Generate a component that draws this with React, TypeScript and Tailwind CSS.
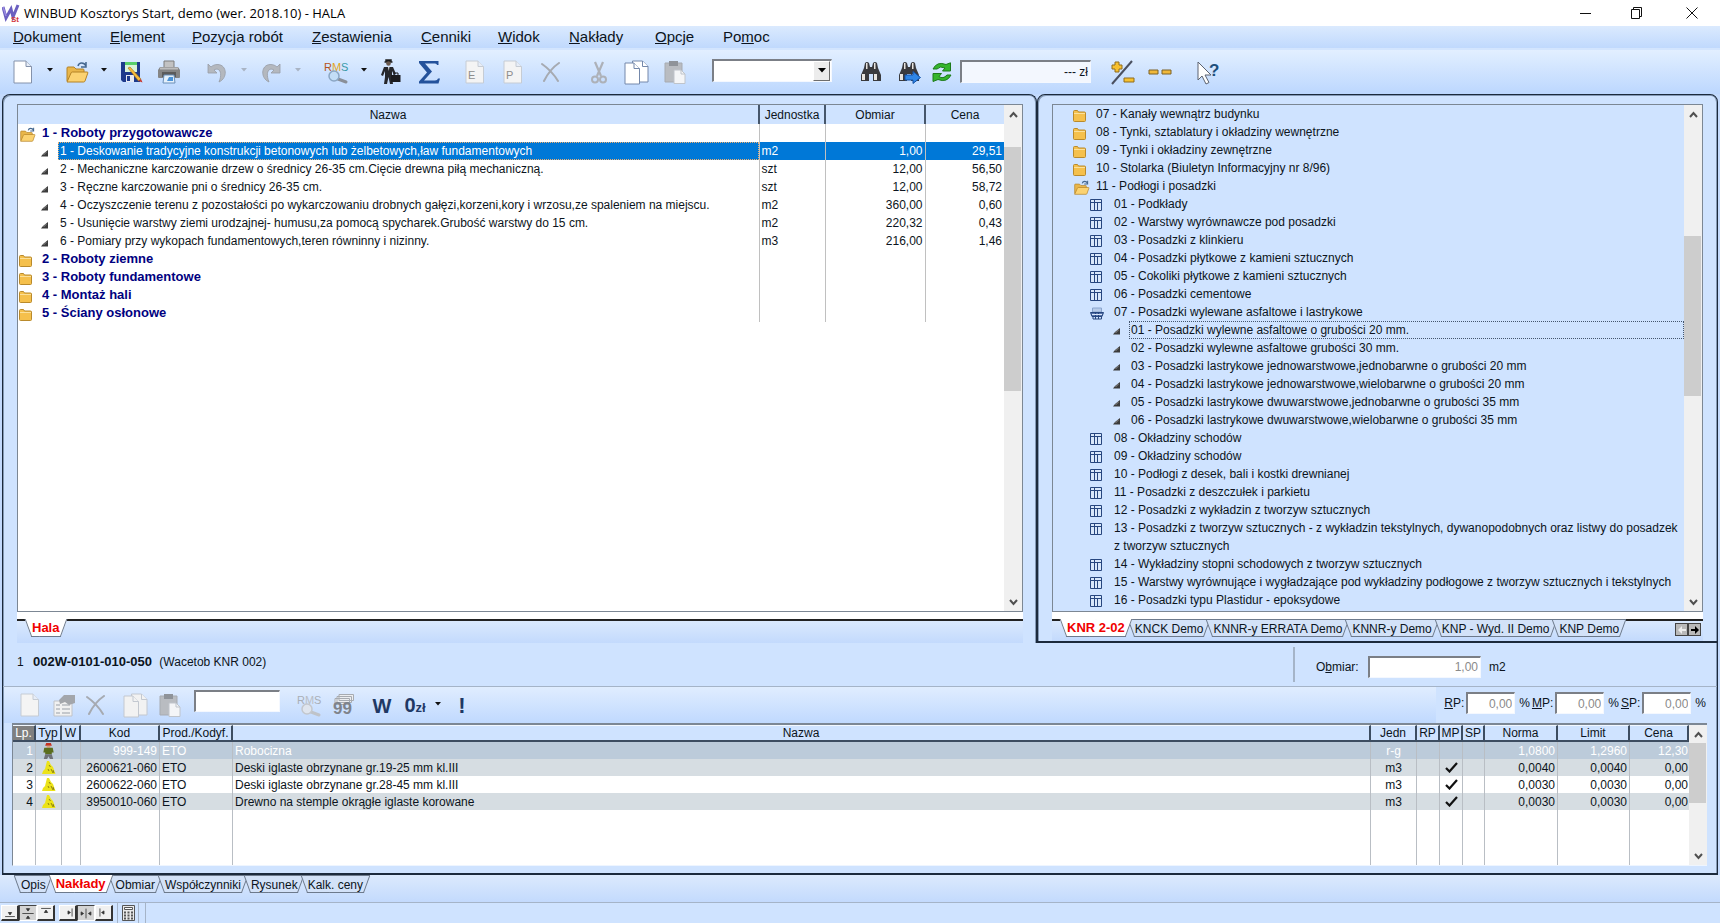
import React from 'react';

type IconProps = { className?: string };

interface WorkItem {
  name: string;
  unit?: string;
  amount?: string;
  price?: string;
  kind: 'open' | 'closed' | 'leaf';
  selected?: boolean;
}

interface TreeNode {
  label: string;
  level: 0 | 1 | 2;
  icon: 'folder' | 'open' | 'book' | 'bookOpen' | 'leaf';
  focused?: boolean;
}

const WORK_ITEMS: WorkItem[] = [
  { name: '1 - Roboty przygotowawcze', kind: 'open' },
  { name: '1 - Deskowanie tradycyjne konstrukcji betonowych lub żelbetowych,ław fundamentowych', unit: 'm2', amount: '1,00', price: '29,51', kind: 'leaf', selected: true },
  { name: '2 - Mechaniczne karczowanie drzew o średnicy 26-35 cm.Cięcie drewna piłą mechaniczną.', unit: 'szt', amount: '12,00', price: '56,50', kind: 'leaf' },
  { name: '3 - Ręczne karczowanie pni o średnicy 26-35 cm.', unit: 'szt', amount: '12,00', price: '58,72', kind: 'leaf' },
  { name: '4 - Oczyszczenie terenu z pozostałości po wykarczowaniu drobnych gałęzi,korzeni,kory i wrzosu,ze spaleniem na miejscu.', unit: 'm2', amount: '360,00', price: '0,60', kind: 'leaf' },
  { name: '5 - Usunięcie warstwy ziemi urodzajnej- humusu,za pomocą spycharek.Grubość warstwy do 15 cm.', unit: 'm2', amount: '220,32', price: '0,43', kind: 'leaf' },
  { name: '6 - Pomiary przy wykopach fundamentowych,teren równinny i nizinny.', unit: 'm3', amount: '216,00', price: '1,46', kind: 'leaf' },
  { name: '2 - Roboty ziemne', kind: 'closed' },
  { name: '3 - Roboty fundamentowe', kind: 'closed' },
  { name: '4 - Montaż hali', kind: 'closed' },
  { name: '5 - Ściany osłonowe', kind: 'closed' },
];

const CATALOG: TreeNode[] = [
  { label: '07 - Kanały wewnątrz budynku', level: 0, icon: 'folder' },
  { label: '08 - Tynki, sztablatury i okładziny wewnętrzne', level: 0, icon: 'folder' },
  { label: '09 - Tynki i okładziny zewnętrzne', level: 0, icon: 'folder' },
  { label: '10 - Stolarka (Biuletyn Informacyjny nr 8/96)', level: 0, icon: 'folder' },
  { label: '11 - Podłogi i posadzki', level: 0, icon: 'open' },
  { label: '01 - Podkłady', level: 1, icon: 'book' },
  { label: '02 - Warstwy wyrównawcze pod posadzki', level: 1, icon: 'book' },
  { label: '03 - Posadzki z klinkieru', level: 1, icon: 'book' },
  { label: '04 - Posadzki płytkowe z kamieni sztucznych', level: 1, icon: 'book' },
  { label: '05 - Cokoliki płytkowe z kamieni sztucznych', level: 1, icon: 'book' },
  { label: '06 - Posadzki cementowe', level: 1, icon: 'book' },
  { label: '07 - Posadzki wylewane asfaltowe i lastrykowe', level: 1, icon: 'bookOpen' },
  { label: '01 - Posadzki wylewne asfaltowe o grubości 20 mm.', level: 2, icon: 'leaf', focused: true },
  { label: '02 - Posadzki wylewne asfaltowe grubości 30 mm.', level: 2, icon: 'leaf' },
  { label: '03 - Posadzki lastrykowe jednowarstwowe,jednobarwne o grubości 20 mm', level: 2, icon: 'leaf' },
  { label: '04 - Posadzki lastrykowe jednowarstwowe,wielobarwne o grubości 20 mm', level: 2, icon: 'leaf' },
  { label: '05 - Posadzki lastrykowe dwuwarstwowe,jednobarwne o grubości 35 mm', level: 2, icon: 'leaf' },
  { label: '06 - Posadzki lastrykowe dwuwarstwowe,wielobarwne o grubości 35 mm', level: 2, icon: 'leaf' },
  { label: '08 - Okładziny schodów', level: 1, icon: 'book' },
  { label: '09 - Okładziny schodów', level: 1, icon: 'book' },
  { label: '10 - Podłogi z desek, bali i kostki drewnianej', level: 1, icon: 'book' },
  { label: '11 - Posadzki z deszczułek i parkietu', level: 1, icon: 'book' },
  { label: '12 - Posadzki z wykładzin z tworzyw sztucznych', level: 1, icon: 'book' },
  { label: '13 - Posadzki z tworzyw sztucznych - z wykładzin tekstylnych, dywanopodobnych oraz listwy do posadzek z tworzyw sztucznych', level: 1, icon: 'book' },
  { label: '14 - Wykładziny stopni schodowych z tworzyw sztucznych', level: 1, icon: 'book' },
  { label: '15 - Warstwy wyrównujące i wygładzające pod wykładziny podłogowe z tworzyw sztucznych i tekstylnych', level: 1, icon: 'book' },
  { label: '16 - Posadzki typu Plastidur - epoksydowe', level: 1, icon: 'book' },
];

const RESOURCES = [
  { lp: 1, kod: '999-149', prod: 'ETO', nazwa: 'Robocizna', jedn: 'r-g', mp: false, norma: '1,0800', limit: '1,2960', cena: '12,30' },
  { lp: 2, kod: '2600621-060', prod: 'ETO', nazwa: 'Deski iglaste obrzynane gr.19-25 mm kl.III', jedn: 'm3', mp: true, norma: '0,0040', limit: '0,0040', cena: '0,00' },
  { lp: 3, kod: '2600622-060', prod: 'ETO', nazwa: 'Deski iglaste obrzynane gr.28-45 mm kl.III', jedn: 'm3', mp: true, norma: '0,0030', limit: '0,0030', cena: '0,00' },
  { lp: 4, kod: '3950010-060', prod: 'ETO', nazwa: 'Drewno na stemple okrągłe iglaste korowane', jedn: 'm3', mp: true, norma: '0,0030', limit: '0,0030', cena: '0,00' },
];

const ROW_COLORS = [
  'bg-[#bccbda] text-white',
  'bg-[#d6dde2]',
  'bg-white',
  'bg-[#d6dde2]',
];

// [text before the hot key, hot key, rest, width of the menu slot]
const MENU: [string, string, string, string][] = [
  ['', 'D', 'okument', 'w-[97px]'],
  ['', 'E', 'lement', 'w-[82px]'],
  ['', 'P', 'ozycja robót', 'w-[120px]'],
  ['', 'Z', 'estawienia', 'w-[109px]'],
  ['', 'C', 'enniki', 'w-[77px]'],
  ['', 'W', 'idok', 'w-[71px]'],
  ['', 'N', 'akłady', 'w-[86px]'],
  ['', 'O', 'pcje', 'w-[68px]'],
  ['Po', 'm', 'oc', 'w-[68px]'],
];

const sunken = 'border-t-2 border-l-2 border-b border-r border-t-[#7b7f86] border-l-[#7b7f86] border-b-[#f4f8ff] border-r-[#f4f8ff] outline-none';

/* ---------- icons ---------- */

const FolderIcon = () => (
  <svg width="13" height="13" viewBox="0 0 13 13">
    <path d="M.5 2.500q0-1 1-1h3l1 1.500h6q1 0 1 1v7.500q0 1-1 1h-10q-1 0-1-1z" fill="#f5c04c" stroke="#b98a2c" />
    <path d="M1 4.500h11" stroke="#fbe09a" />
  </svg>
);

const FolderOpenIcon = ({ className = 'w-[17px] h-[15px]' }: IconProps) => (
  <svg className={className} viewBox="0 0 24 22">
    <path d="M2 20V7q0-1 1-1h6l2 2h7q1 0 1 1v4" fill="#e9b64a" stroke="#b48225" />
    <path d="M2 21l4-9q.4-1 1.400-1H22q1.200 0 .8 1.100L20 20q-.4 1-1.400 1z" fill="#fbd271" stroke="#b48225" />
    <path d="M13 5c1-4 6-4 8 0m0-4v5h-5" fill="none" stroke="#44678f" strokeWidth="1.500" />
  </svg>
);

const LeafIcon = () => (
  <svg width="8" height="8" viewBox="0 0 8 8">
    <path d="M7 1v6.500H0L2 5z" fill="#3c3c3c" />
    <path d="M2.500 6l3-3" stroke="#8a8a8a" />
  </svg>
);

const BookIcon = () => (
  <svg width="12" height="12" viewBox="0 0 12 12">
    <path d="M.5.5h11v11H.5z" fill="#d9e8fb" stroke="#27467f" />
    <path d="M.5 3.500h11M4.500 1v10.500M7.500 3.500v8" stroke="#27467f" fill="none" />
  </svg>
);

const BookOpenIcon = () => (
  <svg width="14" height="13" viewBox="0 0 14 13">
    <path d="M2.500 1h9v4h-9z" fill="#b7cbe8" stroke="#8aa5cf" />
    <path d="M.5 5.500h13l-1.500 4H2z" fill="#5673ab" stroke="#27467f" />
    <path d="M3 9.500V12h8.500V9.500M5.500 6v6M8.500 6v6" fill="none" stroke="#27467f" />
    <path d="M2 7.500h10" stroke="#dce8fa" />
  </svg>
);

const PageIcon = ({ letter, faded }: { letter?: string; faded?: boolean }) => (
  <svg width="20" height="24" viewBox="0 0 20 24">
    <path d="M1 1h12l5.500 5.500V23H1z" fill={faded ? '#f4f4f4' : '#fff'} stroke={faded ? '#c6ccd4' : '#8492ab'} />
    <path d="M13 1v5.500h5.500" fill="#e6edf8" stroke={faded ? '#c6ccd4' : '#8492ab'} />
    {letter && <text x="3" y="19" fontSize="11" fontFamily="Liberation Sans, sans-serif" fill="#8d8d8d">{letter}</text>}
  </svg>
);

const SaveIcon = () => (
  <svg width="23" height="23" viewBox="0 0 23 23">
    <path d="M1 1h19v20H3l-2-2z" fill="#1d3a8c" />
    <path d="M5 1h12v10H5z" fill="#d9f3d9" />
    <path d="M5 1h12v3H5z" fill="#58cf6c" />
    <path d="M6 14h8v7H6z" fill="#e6e9f2" />
    <path d="M7 15h3v5H7z" fill="#1d3a8c" />
    <path d="M8 7l2-1 11 12-2.500 2z" fill="#f5b93a" stroke="#9a6b14" strokeWidth=".6" />
    <path d="M18.500 20l2.500-2 1.500 3.500z" fill="#c8352c" />
  </svg>
);

const PrinterIcon = () => (
  <svg width="24" height="24" viewBox="0 0 24 24">
    <path d="M7 1h10v7H7z" fill="#c2c2c2" stroke="#7d7d7d" />
    <path d="M3 7h18l2 3v7q0 1-1 1H2q-1 0-1-1v-7z" fill="#858585" />
    <path d="M3 8.500h18" stroke="#bdbdbd" strokeWidth="2" />
    <path d="M5 12h14v5H5z" fill="#5b5b5b" />
    <path d="M7 15h10l1 8H6z" fill="#e4f0fb" stroke="#6b8fb8" />
    <path d="M12 17h4v4h-6z" fill="#4b93d8" />
  </svg>
);

const UndoIcon = ({ flip }: { flip?: boolean }) => (
  <svg width="20" height="21" viewBox="0 0 20 21">
    <path
      d={flip ? 'M19 2v9h-9l3-3C8 5 4 10 8 20 -1 16 0 3 9 2.500c3-.2 5.500 1 7 2.500z' : 'M1 2v9h9L7 8c5-3 9 2 5 12 9-4 8-17-1-17.500C8 2.300 5.500 3.500 4 5z'}
      fill="#b4b8be"
      stroke="#989da6"
      strokeWidth=".8"
    />
  </svg>
);

const RmsIcon = ({ faded }: { faded?: boolean }) => (
  <svg width="26" height="24" viewBox="0 0 26 24" fontSize="11" fontFamily="Liberation Sans, sans-serif">
    <text x="0" y="11" fill={faded ? '#a9aeb6' : '#b5541c'}>R</text>
    <text x="8" y="11" fill={faded ? '#b9bdc4' : '#e3a51c'}>M</text>
    <text x="17" y="11" fill={faded ? '#a9aeb6' : '#3a9aa8'}>S</text>
    <path d="M14 19l8 3" stroke={faded ? '#bfc3c9' : '#8a8f98'} strokeWidth="3" strokeLinecap="round" />
    <circle cx="10" cy="16" r="5" fill={faded ? '#dfe5ee' : '#c3ddf6'} stroke={faded ? '#c3c7cd' : '#8ba6c4'} strokeWidth="1.500" />
  </svg>
);

const ManIcon = () => (
  <svg width="20" height="26" viewBox="0 0 20 26">
    <path d="M3.500 3h8M5 3V1h5v2" stroke="#222" strokeWidth="1.500" />
    <circle cx="7.500" cy="4.500" r="2.300" fill="#6b5a4e" />
    <path d="M3 8h9l3 7-2 1-2-4v6l1 7H9l-1.500-7L6 25H3l1-7v-6l-2 5-2-1z" fill="#26272b" />
    <path d="M7 8h1.500l-.7 4z" fill="#e4e4e4" />
    <path d="M10 16h9.500v7H10z" fill="#1b1b1e" />
    <path d="M13 16v-2h4v2" fill="none" stroke="#1b1b1e" />
  </svg>
);

const SigmaIcon = () => (
  <svg width="22" height="24" viewBox="0 0 22 24">
    <path d="M1 1h19.500v4h-1.500q0-1.500-2-1.500H7l7 8-8 9h11q2.500 0 3-2H22L20.500 23.500H1v-2l8-9L1 3z" fill="#24529b" />
  </svg>
);

const CrossIcon = () => (
  <svg width="20" height="20" viewBox="0 0 20 20">
    <path d="M1 2q10 7 16 17M18 1Q9 7 3 19" fill="none" stroke="#a6aab1" strokeWidth="2" strokeLinecap="round" />
  </svg>
);

const CutIcon = () => (
  <svg width="16" height="23" viewBox="0 0 16 23" fill="none" stroke="#adb1b8">
    <path d="M4 1l6 14M12 1L6 15" strokeWidth="2.200" />
    <circle cx="4" cy="18.500" r="3" strokeWidth="2" />
    <circle cx="12" cy="18.500" r="3" strokeWidth="2" />
  </svg>
);

const CopyIcon = ({ faded }: { faded?: boolean }) => (
  <svg width="26" height="25" viewBox="0 0 26 25" fill={faded ? '#f2f2f2' : '#fff'} stroke={faded ? '#c3c8d0' : '#7488ab'}>
    <path d="M8.500 1h10l5.500 5.500V22H8.500z" />
    <path d="M18.500 1v5.500H24" />
    <path d="M1 3h9l5.500 5.500V24H1z" />
    <path d="M10 3v5.500h5.500" />
  </svg>
);

const PasteIcon = () => (
  <svg width="22" height="24" viewBox="0 0 22 24">
    <path d="M1 3h17v19H1z" fill="#b9bcc1" stroke="#a7abb1" />
    <path d="M5 1h9v5H5z" fill="#8f9399" />
    <path d="M10 10h7l4 4v9.500H10z" fill="#f4f5f7" stroke="#bfc4cb" />
    <path d="M17 10v4h4" fill="none" stroke="#bfc4cb" />
  </svg>
);

const BinocularsIcon = ({ next }: { next?: boolean }) => (
  <svg width="24" height="24" viewBox="0 0 24 24">
    <path d="M6 3q2-2 4 0l1 4h2l1-4q2-2 4 0l1 5 3 7v6h-8v-7h-4v7H2v-6l3-7z" fill="#3a3a3d" />
    <path d="M3 14h3v6H3zM15 14h3v6h-3zM7 3h1.500v6H7zM15 3h1.500v6H15z" fill="#e8e4df" />
    {next && <path d="M8 15h8v-3.500l7.500 6-7.500 6V20H8z" fill="#2f86e6" stroke="#1553a8" />}
  </svg>
);

const RefreshIcon = () => (
  <svg width="20" height="21" viewBox="0 0 20 21" fill="#35b52c" stroke="#1d7a1a">
    <path d="M1 7q4-8 13-4.500L18.500.8V9h-8L13 6Q8 3.500 5 7z" />
    <path d="M19 13q-4 8-13 4.500L1 19.500V11.500h8.500L7 14.500q4 3 8-1.500z" />
  </svg>
);

const PlusMinusIcon = () => (
  <svg width="25" height="25" viewBox="0 0 25 25">
    <path d="M22 1L2 24" stroke="#4a5060" strokeWidth="2" />
    <path d="M5 2h4v3h3v4H9v3H5V9H2V5h3z" fill="#f7c02e" stroke="#8f6c1f" />
    <path d="M14 18h10v4H14z" fill="#f7c02e" stroke="#8f6c1f" />
  </svg>
);

const DashesIcon = () => (
  <svg width="24" height="6" viewBox="0 0 24 6" fill="#f0b83a" stroke="#7d6226">
    <path d="M1 1h9v4H1zM14 1h9v4h-9z" />
  </svg>
);

const HelpPointerIcon = () => (
  <svg width="24" height="25" viewBox="0 0 24 25">
    <path d="M2 2v18l4-4 4 8 3-1.500-4-7.500h6z" fill="#fff" stroke="#5c6370" />
    <text x="13" y="16" fontSize="17" fontWeight="bold" fontFamily="Liberation Sans, sans-serif" fill="#1d4f7c">?</text>
  </svg>
);

const PropertiesIcon = () => (
  <svg width="23" height="24" viewBox="0 0 23 24">
    <path d="M1 8h18v15H1z" fill="#f1f1f1" stroke="#c0c3c8" />
    <path d="M3 12h4M9 12h8M3 16h4M9 16h8M3 20h4M9 20h8" stroke="#b7bac0" strokeWidth="1.500" />
    <path d="M6 7l5-5h11v8l-6 2-4-3-5 2z" fill="#a3a6ab" />
  </svg>
);

const StackIcon = () => (
  <svg width="24" height="26" viewBox="0 0 24 26">
    <path d="M7 2.500h14.500v6H7zM5 4.500h14.500v6H5zM3 6.500h14.500v6H3z" fill="#eceef1" stroke="#a7abb1" />
    <text x="1" y="22" fontSize="17" fontWeight="bold" fontFamily="Liberation Sans, sans-serif" fill="#7e838b">99</text>
  </svg>
);

const WorkerIcon = () => (
  <svg width="11" height="16" viewBox="0 0 11 17">
    <path d="M3 0h5l1 3H2z" fill="#c5301f" />
    <path d="M3.500 3h4v2h-4z" fill="#d8a27a" />
    <path d="M1 5h9l1 5H9v2H2v-2H0z" fill="#5a6e1e" />
    <path d="M2 12h7l1.500 5H7l-1.500-3L4 17H.5z" fill="#6f7278" />
  </svg>
);

const MaterialIcon = () => (
  <svg width="14" height="13" viewBox="0 0 14 13">
    <path d="M5 0h2l2 4 2 2 2.500 7H0l1-3 2-2z" fill="#ece319" />
    <path d="M7 4l1.500 2M9 8l2 4M6 8l1 2M11 9l1 3" stroke="#8d8410" />
  </svg>
);

const Check = () => (
  <svg width="13" height="11" viewBox="0 0 13 11">
    <path d="M1 6l3.500 3.500L12 1" fill="none" stroke="#111" strokeWidth="2.200" />
  </svg>
);

const NODE_ICONS = {
  folder: <FolderIcon />,
  open: <FolderOpenIcon />,
  book: <BookIcon />,
  bookOpen: <BookOpenIcon />,
  leaf: <LeafIcon />,
};

/* ---------- small parts ---------- */

const ToolButton = ({ label, width = 'w-[38px]', children }: { label: string; width?: string; children: React.ReactNode }) => (
  <button type="button" aria-label={label} className={`${width} h-full shrink-0 flex items-center justify-center`}>
    {children}
  </button>
);

const DropArrow = ({ faded }: { faded?: boolean }) => (
  <button type="button" aria-label="Rozwiń" className="w-4 h-full shrink-0 flex items-center justify-center pb-1">
    <svg width="6" height="4" viewBox="0 0 6 4">
      <path d="M0 0h6L3 3.500z" fill={faded ? '#a9b4c4' : '#111'} />
    </svg>
  </button>
);

const Chevron = ({ down }: { down?: boolean }) => (
  <svg width="9" height="7" viewBox="0 0 9 7">
    <path d={down ? 'M1 1l3.500 4L8 1' : 'M1 6l3.500-4L8 6'} fill="none" stroke="#505050" strokeWidth="2" />
  </svg>
);

const ScrollBar = ({ offset, thumb }: { offset: string; thumb: string }) => (
  <div className="w-[18px] shrink-0 self-stretch bg-[#f0f0f0] flex flex-col">
    <button type="button" aria-label="W górę" className="h-[18px] flex items-center justify-center"><Chevron /></button>
    <div className={offset} />
    <div className={`${thumb} mr-px bg-[#cdcdcd]`} />
    <div className="flex-1" />
    <button type="button" aria-label="W dół" className="h-[18px] flex items-center justify-center"><Chevron down /></button>
  </div>
);

const Tab = ({ label, active }: { label: string; active?: boolean }) => {
  const fill = active ? 'bg-white' : 'bg-[#d3e2f8]';
  return (
    <button
      type="button"
      role="tab"
      aria-selected={!!active}
      className={`relative h-[18px] px-[7px] -mr-1 whitespace-nowrap ${active ? 'z-10 font-bold text-[13px] text-[#f00000]' : 'border-t border-[#6d7a8c]'}`}
    >
      <span className={`absolute top-0 bottom-0 left-[3px] w-1/2 skew-x-[20deg] border-l border-b border-[#6d7a8c] ${fill}`} />
      <span className={`absolute top-0 bottom-0 right-[3px] w-1/2 -skew-x-[20deg] border-r border-b border-[#6d7a8c] ${fill}`} />
      <span className="relative">{label}</span>
    </button>
  );
};

const PercentField = ({ id, hot }: { id: string; hot: string }) => (
  <div className="flex items-center">
    <label htmlFor={id}><u>{hot}</u>P:</label>
    <input id={id} defaultValue="0,00" className={`${sunken} w-[49px] h-[22px] ml-0.5 mr-1 pr-0.5 bg-white text-right text-[#8a8a8a]`} />
    <span>%</span>
  </div>
);

/* ---------- sections ---------- */

const TitleBar = () => (
  <header className="h-[26px] bg-white flex items-center pl-0.5 font-['Open_Sans',sans-serif] text-[13px] text-black">
    <svg width="18" height="19" viewBox="0 0 18 19">
      <path d="M1 3l3 11 5-9 2 8 5-12" fill="none" stroke="#6a5fc0" strokeWidth="3" />
      <path d="M1 3l3 9" stroke="#9a8be0" strokeWidth="1.500" />
      <text x="9" y="18" fontSize="8" fontWeight="bold" fontFamily="Liberation Sans, sans-serif" fill="#d5373c">St</text>
    </svg>
    <h1 className="ml-1 flex-1">WINBUD Kosztorys Start, demo (wer. 2018.10) - HALA</h1>
    <button type="button" aria-label="Minimalizuj" className="w-[52px] flex justify-center">
      <svg width="11" height="11"><path d="M0 5.500h11" stroke="#111" /></svg>
    </button>
    <button type="button" aria-label="Przywróć" className="w-[52px] flex justify-center">
      <svg width="12" height="12" fill="none" stroke="#111"><path d="M.5 2.500h8v9h-8zM2.500 2.500v-2h8v9h-2" /></svg>
    </button>
    <button type="button" aria-label="Zamknij" className="w-[57px] flex justify-center">
      <svg width="12" height="12"><path d="M.5.5l11 11M11.500.5l-11 11" stroke="#111" /></svg>
    </button>
  </header>
);

const MenuBar = () => (
  <nav className="h-[22px] bg-linear-to-b from-[#dbeafe] to-[#c0d9fd] flex items-center pl-[13px] text-[15px]">
    {MENU.map(([before, hot, rest, width]) => (
      <button key={rest} type="button" className={`${width} text-left whitespace-nowrap`}>
        {before}<u>{hot}</u>{rest}
      </button>
    ))}
  </nav>
);

const MainToolbar = () => (
  <div className="h-[46px] border-t-2 border-[#d3e5fe] bg-linear-to-b from-[#e2efff] to-[#bcd7fe] flex items-center pl-1">
    <ToolButton label="Nowy"><PageIcon /></ToolButton>
    <DropArrow />
    <ToolButton label="Otwórz"><FolderOpenIcon className="w-6 h-[22px]" /></ToolButton>
    <DropArrow />
    <ToolButton label="Zapisz"><SaveIcon /></ToolButton>
    <ToolButton label="Drukuj"><PrinterIcon /></ToolButton>
    <div className="flex h-full ml-2.5">
      <ToolButton label="Cofnij"><UndoIcon /></ToolButton>
      <DropArrow faded />
      <ToolButton label="Ponów"><UndoIcon flip /></ToolButton>
      <DropArrow faded />
    </div>
    <div className="flex h-full ml-3">
      <ToolButton label="RMS"><RmsIcon /></ToolButton>
      <DropArrow />
      <ToolButton label="Inwestor"><ManIcon /></ToolButton>
      <ToolButton label="Suma"><SigmaIcon /></ToolButton>
    </div>
    <div className="flex h-full ml-2">
      <ToolButton label="Element"><PageIcon letter="E" faded /></ToolButton>
      <ToolButton label="Pozycja"><PageIcon letter="P" faded /></ToolButton>
      <ToolButton label="Usuń"><CrossIcon /></ToolButton>
    </div>
    <div className="flex h-full ml-2.5">
      <ToolButton label="Wytnij"><CutIcon /></ToolButton>
      <ToolButton label="Kopiuj"><CopyIcon /></ToolButton>
      <ToolButton label="Wklej"><PasteIcon /></ToolButton>
    </div>
    <div className="relative ml-[18px] w-[120px] mb-1">
      <select aria-label="Szukaj" className={`${sunken} block appearance-none w-full h-[23px] bg-white`} />
      <span className="pointer-events-none absolute right-0.5 top-0.5 bottom-px w-[17px] bg-[#ececec] border border-t-white border-l-white border-r-[#6d6d6d] border-b-[#6d6d6d] flex items-center justify-center">
        <svg width="8" height="5"><path d="M0 0h8L4 4.500z" fill="#000" /></svg>
      </span>
    </div>
    <div className="flex h-full ml-5">
      <ToolButton label="Znajdź"><BinocularsIcon /></ToolButton>
      <ToolButton label="Znajdź następny"><BinocularsIcon next /></ToolButton>
      <ToolButton label="Odśwież" width="w-7"><RefreshIcon /></ToolButton>
    </div>
    <input aria-label="Wartość" defaultValue="--- zł" className={`${sunken} ml-1 mb-0.5 w-[131px] h-[23px] pr-0.5 text-right bg-[#f3f7fe]`} />
    <div className="flex h-full ml-3">
      <ToolButton label="Narzuty"><PlusMinusIcon /></ToolButton>
      <ToolButton label="Zwiń"><DashesIcon /></ToolButton>
    </div>
    <div className="flex h-full ml-2.5">
      <ToolButton label="Pomoc"><HelpPointerIcon /></ToolButton>
    </div>
  </div>
);

const EstimatePanel = () => (
  <section className="flex flex-col border-t border-x border-[#1c2a3c] shadow-[inset_1px_1px_#8499b5,inset_-1px_0_#8499b5] rounded-t-lg bg-[#cfe3ff] pt-[9px] pl-3.5 pr-[13px]">
    <div className="flex-1 flex border border-[#7c8794] bg-white">
      <div className="flex-1">
        <table className="w-full table-fixed border-collapse">
          <colgroup>
            <col />
            <col className="w-[66px]" />
            <col className="w-[100px]" />
            <col className="w-[79px]" />
          </colgroup>
          <thead>
            <tr className="h-[19px] bg-[#cfe3ff]">
              <th className="font-normal p-0">Nazwa</th>
              <th className="font-normal p-0 border-l-2 border-[#46566b]">Jednostka</th>
              <th className="font-normal p-0 border-l-2 border-[#46566b]">Obmiar</th>
              <th className="font-normal p-0 border-l-2 border-[#46566b]">Cena</th>
            </tr>
          </thead>
          <tbody>
            {WORK_ITEMS.map((item) => (
              <tr key={item.name} className="h-[18px]">
                <td className="p-0">
                  {item.kind === 'leaf' ? (
                    <div className="flex items-center">
                      <span className="w-10 pl-[23px] pt-1 shrink-0"><LeafIcon /></span>
                      <span className={`flex-1 h-[18px] pl-px whitespace-nowrap border border-dotted ${item.selected ? 'bg-[#0078d7] text-white border-[#f0b070]' : 'border-transparent'} leading-4`}>
                        {item.name}
                      </span>
                    </div>
                  ) : (
                    <div className="flex items-center h-[18px]">
                      <span className="w-6 shrink-0 pt-0.5 pl-px">{item.kind === 'open' ? <FolderOpenIcon /> : <FolderIcon />}</span>
                      <span className="font-bold text-[13px] text-[#000080]">{item.name}</span>
                    </div>
                  )}
                </td>
                <td className={`p-0 pl-0.5 border-l border-[#c0c0c0] ${item.selected ? 'bg-[#0078d7] text-white' : ''}`}>{item.unit}</td>
                <td className={`p-0 pr-0.5 border-l border-[#c0c0c0] text-right ${item.selected ? 'bg-[#0078d7] text-white' : ''}`}>{item.amount}</td>
                <td className={`p-0 pr-0.5 border-l border-[#c0c0c0] text-right ${item.selected ? 'bg-[#0078d7] text-white' : ''}`}>{item.price}</td>
              </tr>
            ))}
          </tbody>
        </table>
      </div>
      <ScrollBar offset="h-6" thumb="h-[244px]" />
    </div>
    <div className="h-[7px] bg-white" />
    <div role="tablist" className="flex h-6 bg-linear-to-b from-[#dceafd] to-[#c3dafd]">
      <div className="w-2 border-t-2 border-[#222]" />
      <Tab label="Hala" active />
      <div className="flex-1 border-t-2 border-[#222]" />
    </div>
  </section>
);

const LEVEL_PAD = ['pl-5', 'pl-[37px]', 'pl-[60px]'];
const ICON_SLOT = ['w-[21px]', 'w-[22px]', 'w-4'];

const CatalogPanel = () => (
  <section className="flex flex-col border border-b-2 border-[#1c2a3c] shadow-[inset_1px_1px_#8499b5,inset_-1px_0_#8499b5] rounded-t-lg bg-[#cfe3ff] pt-[9px] px-3.5">
    <div className="flex-1 flex border border-[#7c8794]">
      <ul className="flex-1">
        {CATALOG.map((node, i) => (
          <li key={i} className={`flex items-start ${LEVEL_PAD[node.level]}`}>
            <span className={`${ICON_SLOT[node.level]} h-[18px] pt-0.5 shrink-0 flex items-center`}>{NODE_ICONS[node.icon]}</span>
            <span className={node.focused ? 'flex-1 px-px leading-4 border border-dotted border-[#44566e]' : 'flex-1 pl-0.5'}>{node.label}</span>
          </li>
        ))}
      </ul>
      <ScrollBar offset="h-[113px]" thumb="h-40" />
    </div>
    <div className="h-[7px] bg-white" />
    <div role="tablist" className="flex h-[22px] bg-linear-to-b from-[#dceafd] to-[#c3dafd]">
      <div className="w-2 border-t-2 border-[#222]" />
      <Tab label="KNR 2-02" active />
      <Tab label="KNCK Demo" />
      <Tab label="KNNR-y ERRATA Demo" />
      <Tab label="KNNR-y Demo" />
      <Tab label="KNP - Wyd. II Demo" />
      <Tab label="KNP Demo" />
      <div className="flex-1 border-t-2 border-[#222] flex justify-end pt-0.5 pr-0.5">
        <button type="button" aria-label="Poprzednie" className="w-[13px] h-[13px] border border-[#444] bg-[#b9b9b9] flex items-center justify-center">
          <svg width="8" height="8"><path d="M0 4l4-4v3h4v2H4v3z" fill="#ededed" /></svg>
        </button>
        <button type="button" aria-label="Następne" className="w-[13px] h-[13px] border border-[#444] bg-[#b9b9b9] flex items-center justify-center">
          <svg width="8" height="8"><path d="M8 4L4 0v3H0v2h4v3z" fill="#000" /></svg>
        </button>
      </div>
    </div>
  </section>
);

const HEAD_CELL = 'font-normal p-0 border-r-2 border-b-2 border-[#3d4d61] border-t border-t-[#f2f8ff]';
const CELL = 'p-0 px-0.5 border-r border-[#b9bec4]';

const ResourceTable = () => (
  <div className="flex ml-[9px] mr-2.5 h-[143px] border-t-2 border-l border-[#7c8794] border-b border-b-[#eef5ff] bg-white">
    <table className="flex-1 w-full h-full table-fixed border-separate border-spacing-0">
      <colgroup>
        <col className="w-[23px]" />
        <col className="w-[26px]" />
        <col className="w-[19px]" />
        <col className="w-[79px]" />
        <col className="w-[73px]" />
        <col />
        <col className="w-[46px]" />
        <col className="w-[23px]" />
        <col className="w-[23px]" />
        <col className="w-[22px]" />
        <col className="w-[73px]" />
        <col className="w-[72px]" />
        <col className="w-[59px]" />
      </colgroup>
      <thead>
        <tr className="h-[17px] bg-[#cfe3ff] leading-[14px]">
          <th className={`${HEAD_CELL} bg-[#808080] text-white`}>Lp.</th>
          {['Typ', 'W', 'Kod', 'Prod./Kodyf.', 'Nazwa', 'Jedn', 'RP', 'MP', 'SP', 'Norma', 'Limit', 'Cena'].map(h => (
            <th key={h} className={HEAD_CELL}>{h}</th>
          ))}
        </tr>
      </thead>
      <tbody>
        {RESOURCES.map((r, i) => (
          <tr key={r.lp} className={`h-[17px] leading-4 ${ROW_COLORS[i]}`}>
            <td className={`${CELL} text-right`}>{r.lp}</td>
            <td className={CELL}><span className="flex justify-center">{i === 0 ? <WorkerIcon /> : <MaterialIcon />}</span></td>
            <td className={CELL} />
            <td className={`${CELL} text-right`}>{r.kod}</td>
            <td className={CELL}>{r.prod}</td>
            <td className={CELL}>{r.nazwa}</td>
            <td className={`${CELL} text-center`}>{r.jedn}</td>
            <td className={CELL} />
            <td className={CELL}>{r.mp && <span className="flex justify-center"><Check /></span>}</td>
            <td className={CELL} />
            <td className={`${CELL} text-right`}>{r.norma}</td>
            <td className={`${CELL} text-right`}>{r.limit}</td>
            <td className="p-0 pr-px text-right">{r.cena}</td>
          </tr>
        ))}
        <tr>
          {Array.from({ length: 12 }, (_, i) => <td key={i} className={CELL} />)}
          <td />
        </tr>
      </tbody>
    </table>
    <ScrollBar offset="h-0" thumb="h-[60px]" />
  </div>
);

const DetailsPanel = () => (
  <section className="border-x border-b-2 border-[#1c2a3c] shadow-[inset_1px_0_#8499b5,inset_-1px_0_#8499b5] bg-[#cfe3ff] pb-[7px]">
    <div className="flex h-11 border-b border-[#a5b4c8]">
      <p className="flex-1 pl-3.5 pt-2.5">
        1 <strong className="ml-1.5 mr-1 text-[13px]">002W-0101-010-050</strong> (Wacetob KNR 002)
      </p>
      <div className="w-[424px] my-1 pt-1 border-l-2 border-[#a5b4c8] pl-[21px] flex items-center">
        <label htmlFor="obmiar" className="w-[52px]">O<u>b</u>miar:</label>
        <input id="obmiar" defaultValue="1,00" className={`${sunken} w-[113px] h-[22px] pr-0.5 bg-white text-right text-[#8a8a8a]`} />
        <span className="ml-2">m2</span>
      </div>
    </div>
    <div className="h-9 mx-px flex items-center bg-linear-to-b from-[#e0edff] to-[#c0d9fe] pl-2.5">
      <ToolButton label="Nowy nakład" width="w-8"><PageIcon faded /></ToolButton>
      <ToolButton label="Właściwości" width="w-9"><PropertiesIcon /></ToolButton>
      <ToolButton label="Usuń nakład" width="w-7"><CrossIcon /></ToolButton>
      <div className="flex h-full ml-2">
        <ToolButton label="Kopiuj nakład" width="w-9"><CopyIcon faded /></ToolButton>
        <ToolButton label="Wklej nakład" width="w-8"><PasteIcon /></ToolButton>
      </div>
      <input aria-label="Filtr" className={`${sunken} ml-2 mb-2 w-[86px] h-[22px] bg-white`} />
      <div className="flex h-full ml-3">
        <ToolButton label="RMS nakładu" width="w-9"><RmsIcon faded /></ToolButton>
        <ToolButton label="Zestaw" width="w-8"><StackIcon /></ToolButton>
      </div>
      <div className="flex h-full ml-1 pt-0.5 text-[#1f3864] font-bold text-[20px] leading-8">
        <button type="button" className="w-9">W</button>
        <button type="button" className="w-[30px]">0<span className="text-[13px]">zł</span></button>
        <DropArrow />
        <button type="button" className="w-8 text-[22px]">!</button>
      </div>
      <div className="flex-1" />
      <div className="h-full flex gap-0.5 items-center pl-2 pr-2.5 pb-1 bg-[#cfe3ff]">
        <PercentField id="rp" hot="R" />
        <PercentField id="mp" hot="M" />
        <PercentField id="sp" hot="S" />
      </div>
    </div>
    <ResourceTable />
  </section>
);

const DetailTabs = () => (
  <div role="tablist" className="flex h-[27px] pl-3.5 bg-linear-to-b from-[#dceafd] to-[#c3dafd]">
    <Tab label="Opis" />
    <Tab label="Nakłady" active />
    <Tab label="Obmiar" />
    <Tab label="Współczynniki" />
    <Tab label="Rysunek" />
    <Tab label="Kalk. ceny" />
  </div>
);

const LAYOUT_BUTTONS = [
  { label: 'Dół', d: 'M2 13h12M6 8h4l-2 3z', pressed: false },
  { label: 'Środek', d: 'M1 8h14M6 2h4L8 5zM6 14h4l-2-3z', pressed: true },
  { label: 'Góra', d: 'M2 3h12M6 8h4L8 5z', pressed: false },
  { label: 'Prawo', d: 'M13 3v10M8 6v4l3-2z', pressed: false },
  { label: 'Centrum', d: 'M8 2v12M2 6v4l3-2zM14 6v4l-3-2z', pressed: true },
  { label: 'Lewo', d: 'M3 3v10M8 6v4L5 8z', pressed: false },
];

const StatusBar = () => (
  <footer className="h-[21px] shrink-0 border-t border-[#a5b4c8] bg-[#cfe3ff] flex items-center pl-px">
    {LAYOUT_BUTTONS.map((b, i) => (
      <button
        key={b.label}
        type="button"
        aria-label={b.label}
        className={`w-[18px] h-4 border flex items-center justify-center ${i === 3 ? 'ml-1' : ''} ${b.pressed ? 'bg-[#d4d4d4] border-[#444] border-r-white border-b-white' : 'bg-[#f0f0f0] border-white border-r-2 border-b-2 border-r-[#333] border-b-[#333]'}`}
      >
        <svg width="14" height="13" viewBox="0 0 16 16" fill="#333" stroke="#333"><path d={b.d} /></svg>
      </button>
    ))}
    <button type="button" aria-label="Kalkulator" className="w-[22px] h-full ml-1 border-x border-[#a5b4c8] flex items-center justify-center">
      <svg width="13" height="16" viewBox="0 0 13 16">
        <path d="M.5.5h12v15H.5z" fill="#e9e9e9" stroke="#555" />
        <path d="M2.500 2.500h8v2h-8z" fill="#fff" stroke="#555" />
        <path d="M2 7.500h9M2 10.500h9M2 13.500h9" stroke="#555" strokeWidth="2" strokeDasharray="2 1.500" />
      </svg>
    </button>
    <div className="h-full ml-1.5 border-l border-[#a5b4c8]" />
  </footer>
);

export default function App() {
  return (
    <div className="min-h-screen flex flex-col bg-[#c3dafd] font-['Liberation_Sans',Arial,sans-serif] text-[12px] leading-[18px] text-[#0c1420]">
      <TitleBar />
      <MenuBar />
      <MainToolbar />
      <main className="flex-1 flex flex-col px-0.5">
        <div className="flex-1 grid grid-cols-[minmax(0,1035fr)_minmax(0,681fr)]">
          <EstimatePanel />
          <CatalogPanel />
        </div>
        <DetailsPanel />
      </main>
      <DetailTabs />
      <StatusBar />
    </div>
  );
}
